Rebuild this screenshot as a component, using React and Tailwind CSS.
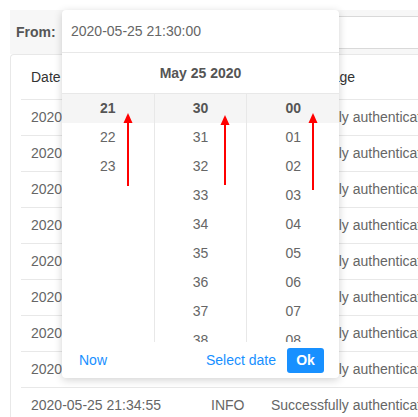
const rows = [
  ['2020-05-25 21:30:12', 'INFO', 'Successfully authenticated user admin'],
  ['2020-05-25 21:30:48', 'INFO', 'Successfully authenticated user admin'],
  ['2020-05-25 21:31:05', 'INFO', 'Successfully authenticated user admin'],
  ['2020-05-25 21:31:37', 'INFO', 'Successfully authenticated user admin'],
  ['2020-05-25 21:32:10', 'INFO', 'Successfully authenticated user admin'],
  ['2020-05-25 21:32:44', 'INFO', 'Successfully authenticated user admin'],
  ['2020-05-25 21:33:19', 'INFO', 'Successfully authenticated user admin'],
  ['2020-05-25 21:34:02', 'INFO', 'Successfully authenticated user admin'],
  ['2020-05-25 21:34:55', 'INFO', 'Successfully authenticated user admin'],
];

const hours = ['21', '22', '23'];
const minutes = ['30', '31', '32', '33', '34', '35', '36', '37', '38', '39'];
const seconds = ['00', '01', '02', '03', '04', '05', '06', '07', '08', '09'];

function Column({ items, first }) {
  return (
    <div className={`flex-1 flex flex-col ${first ? '' : 'border-l border-[#e8e8e8]'}`}>
      {items.map((v, i) => (
        <div
          key={v}
          className={`h-[29px] shrink-0 flex items-center justify-center ${
            i === 0 ? 'bg-[#f5f5f5] font-bold text-[#555]' : 'text-[#666]'
          }`}
        >
          {v}
        </div>
      ))}
    </div>
  );
}

function Arrow({ x, top, bottom }) {
  return (
    <g>
      <line x1={x} y1={top + 9} x2={x} y2={bottom} stroke="#ff0000" strokeWidth="2" />
      <polygon points={`${x},${top} ${x - 4.5},${top + 10} ${x + 4.5},${top + 10}`} fill="#ff0000" />
    </g>
  );
}

export default function App() {
  return (
    <div className="relative w-[418px] h-[417px] overflow-hidden bg-white text-[14px] font-['Liberation_Sans',Arial,sans-serif]">
      <div className="pl-[10px] pt-[10px]">
        {/* toolbar */}
        <div className="flex items-center h-[44px] bg-[#f7f7f7] pl-[6px]">
          <span className="w-[46px] font-bold text-[#555]">From:</span>
          <div className="flex-1 h-[33px] bg-white border border-[#d9d9d9] border-r-0" />
        </div>

        {/* table card */}
        <div className="bg-white border border-[#e8e8e8] border-r-0 rounded-tl-[4px] pl-[10px]">
          <div className="grid grid-cols-[180px_60px_1fr] h-[45px] items-center border-b border-[#e8e8e8] text-[#333] whitespace-nowrap">
            <span className="pl-[10px]">Date</span>
            <span className="pl-[10px]">Level</span>
            <span className="pl-[10px]">Log message</span>
          </div>
          {rows.map((r, i) => (
            <div
              key={i}
              className="grid grid-cols-[180px_60px_1fr] h-[36px] items-center border-b border-[#e8e8e8] text-[#666] whitespace-nowrap"
            >
              <span className="pl-[10px]">{r[0]}</span>
              <span className="pl-[10px]">{r[1]}</span>
              <span className="pl-[10px] overflow-hidden">{r[2]}</span>
            </div>
          ))}
        </div>
      </div>

      {/* date-time picker popup */}
      <div className="absolute left-[62px] top-[10px] w-[277px] h-[368px] bg-white rounded-[4px] shadow-[0_2px_8px_rgba(0,0,0,0.18)] flex flex-col overflow-hidden">
        <div className="h-[43px] shrink-0 flex items-center px-[9px] text-[#666] border-b border-[#e8e8e8]">
          2020-05-25 21:30:00
        </div>
        <div className="h-[41px] shrink-0 flex items-center justify-center font-bold text-[#555] border-b border-[#e8e8e8]">
          May 25 2020
        </div>
        <div className="h-[248px] shrink-0 flex overflow-hidden">
          <Column items={hours} first />
          <Column items={minutes} />
          <Column items={seconds} />
        </div>
        <div className="flex-1 flex items-center pl-[17px] pr-[15px]">
          <span className="text-[#1890ff]">Now</span>
          <span className="ml-auto text-[#1890ff]">Select date</span>
          <button className="ml-[11px] w-[37px] h-[25px] rounded-[3px] bg-[#1890ff] text-white font-bold">Ok</button>
        </div>
      </div>

      {/* annotation arrows */}
      <svg className="absolute left-0 top-0 pointer-events-none" width="418" height="417">
        <Arrow x={128} top={113} bottom={186} />
        <Arrow x={225} top={115} bottom={185} />
        <Arrow x={313} top={113} bottom={190} />
      </svg>
    </div>
  );
}
